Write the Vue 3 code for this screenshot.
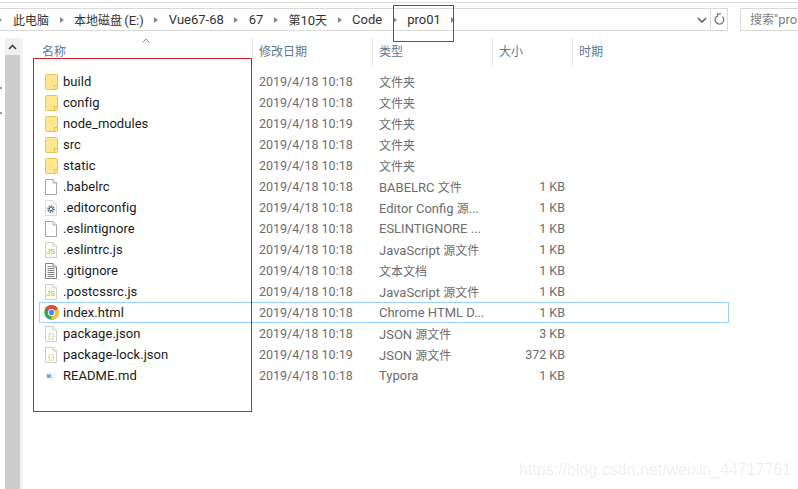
<script setup>
const crumbs = ['本地磁盘 (E:)', 'Vue67-68', '67', '第10天', 'Code', 'pro01']
const columns = [
  { label: '修改日期', width: 120 },
  { label: '类型', width: 120 },
  { label: '大小', width: 80 },
  { label: '时期', width: 160 }
]
const files = [
  { name: 'build', date: '2019/4/18 10:18', type: '文件夹', size: '', icon: 'folder' },
  { name: 'config', date: '2019/4/18 10:18', type: '文件夹', size: '', icon: 'folder' },
  { name: 'node_modules', date: '2019/4/18 10:19', type: '文件夹', size: '', icon: 'folder' },
  { name: 'src', date: '2019/4/18 10:18', type: '文件夹', size: '', icon: 'folder' },
  { name: 'static', date: '2019/4/18 10:18', type: '文件夹', size: '', icon: 'folder' },
  { name: '.babelrc', date: '2019/4/18 10:18', type: 'BABELRC 文件', size: '1 KB', icon: 'blank' },
  { name: '.editorconfig', date: '2019/4/18 10:18', type: 'Editor Config 源...', size: '1 KB', icon: 'gear' },
  { name: '.eslintignore', date: '2019/4/18 10:18', type: 'ESLINTIGNORE ...', size: '1 KB', icon: 'blank' },
  { name: '.eslintrc.js', date: '2019/4/18 10:18', type: 'JavaScript 源文件', size: '1 KB', icon: 'js' },
  { name: '.gitignore', date: '2019/4/18 10:18', type: '文本文档', size: '1 KB', icon: 'text' },
  { name: '.postcssrc.js', date: '2019/4/18 10:18', type: 'JavaScript 源文件', size: '1 KB', icon: 'js' },
  { name: 'index.html', date: '2019/4/18 10:18', type: 'Chrome HTML D...', size: '1 KB', icon: 'chrome', active: true },
  { name: 'package.json', date: '2019/4/18 10:18', type: 'JSON 源文件', size: '3 KB', icon: 'json' },
  { name: 'package-lock.json', date: '2019/4/18 10:19', type: 'JSON 源文件', size: '372 KB', icon: 'json' },
  { name: 'README.md', date: '2019/4/18 10:18', type: 'Typora', size: '1 KB', icon: 'md' }
]
// Chinese glyphs sit at 12px beside 13px Latin text, as in the reference
const runs = (text) =>
  text.split(/([\u4e00-\u9fff]+)/).filter(Boolean).map((t) => ({ t, cjk: /[\u4e00-\u9fff]/.test(t) }))
const docStroke = { blank: '#a6a6a6', gear: '#dcdcdc', js: '#cfcfcf', text: '#808080', json: '#cfcfcf' }
</script>

<template>
  <div class="win">
    <div class="topline"></div>
    <div class="toolbar">
      <div class="address">
        <div class="crumbs">
          <span class="sep first"></span>
          <span class="crumb"><span class="cjk">此电脑</span></span>
          <template v-for="c in crumbs" :key="c">
            <span class="sep"></span>
            <span class="crumb"><span v-for="(r, i) in runs(c)" :key="i" :class="{ cjk: r.cjk }">{{ r.t }}</span></span>
          </template>
          <span class="sep"></span>
        </div>
        <svg class="chev" width="10" height="6" viewBox="0 0 10 6"><path d="M1 1l4 4 4-4" fill="none" stroke="#666" stroke-width="1.7"/></svg>
        <div class="refresh">
          <svg width="11" height="13" viewBox="0 0 11 13"><path d="M8.4 3.6A4.3 4.3 0 1 1 4.2 2.6M3.4 .4V3.9M3.4 .9H7" fill="none" stroke="#777" stroke-width="1.3"/></svg>
        </div>
      </div>
      <div class="search"><span class="cjk">搜索</span>"pro01"</div>
    </div>
    <div class="body">
      <i class="tick t1"></i>
      <i class="tick t2"></i>
      <div class="scrollbar">
        <div class="scroll-btn">
          <svg width="9" height="6" viewBox="0 0 9 6"><path d="M1 5l3.5-3.5L8 5" fill="none" stroke="#444" stroke-width="1.6"/></svg>
        </div>
        <div class="scroll-thumb"></div>
      </div>
      <div class="list">
        <div class="head">
          <div class="col-name">
            <svg class="sort" width="8" height="5" viewBox="0 0 8 5"><path d="M.5 4.5L4 1l3.5 3.5" fill="none" stroke="#8f8f8f"/></svg>
            <span>名称</span>
          </div>
          <div v-for="c in columns" :key="c.label" class="col" :style="{ width: c.width + 'px' }">{{ c.label }}</div>
        </div>
        <div class="rows">
          <div v-for="f in files" :key="f.name" class="row" :class="{ active: f.active }">
            <div class="cell-name">
              <span class="icon">
                <svg v-if="f.icon === 'folder'" width="13" height="16" viewBox="0 0 13 16">
                  <path d="M.5 1.5q0-1 1-1h10q1 0 1 1v13q0 1-1 1h-10q-1 0-1-1z" fill="#ffe691" stroke="#e8c35a"/>
                  <path d="M9.5 15.5V11.5h3" fill="none" stroke="#e8c35a"/>
                </svg>
                <svg v-else-if="f.icon === 'chrome'" class="chrome" width="15" height="15" viewBox="0 0 16 16">
                  <circle cx="8" cy="8" r="7.8" fill="#3aa757"/>
                  <path d="M8 8L1.2 4.1A7.8 7.8 0 0 1 14.8 4.1z" fill="#dd4b39"/>
                  <path d="M8 8l6.8-3.9A7.8 7.8 0 0 1 8 15.8z" fill="#fbc02d"/>
                  <circle cx="8" cy="8" r="3.8" fill="#fff"/>
                  <circle cx="8" cy="8" r="2.9" fill="#4a8ff0"/>
                </svg>
                <svg v-else-if="f.icon === 'md'" class="md" width="12" height="14" viewBox="0 0 12 14">
                  <path d="M.5 3.5h11v8H2.5l-2-1.5z" fill="#f7f7f7"/>
                  <text x="2" y="9" font-size="4.6" font-weight="700" fill="#6a6a6a" font-family="Liberation Sans, sans-serif">M↓</text>
                </svg>
                <svg v-else width="12" height="16" viewBox="0 0 12 16">
                  <path d="M.5.5h7.5l3.5 3.5v11.5H.5z" :fill="f.icon === 'js' ? '#fcfcf0' : '#fff'" :stroke="docStroke[f.icon]"/>
                  <path d="M8 .5V4h3.5" fill="#f2f2f2" :stroke="docStroke[f.icon]"/>
                  <g v-if="f.icon === 'gear'">
                    <circle cx="6" cy="9" r="2.9" fill="none" stroke="#5f7480" stroke-width="1.7" stroke-dasharray="1.5 .7"/>
                    <circle cx="6" cy="9" r="1.7" fill="none" stroke="#5f7480"/>
                  </g>
                  <g v-else-if="f.icon === 'text'" stroke="#808080">
                    <path d="M2.5 3.5h4M2.5 5.5h7M2.5 7.5h7M2.5 9.5h7M2.5 11.5h7M2.5 13.5h7"/>
                  </g>
                  <text v-else-if="f.icon === 'js'" x="1.6" y="11.5" font-size="7" font-weight="700" fill="#cfc45a" font-family="Liberation Sans, sans-serif">JS</text>
                  <text v-else-if="f.icon === 'json'" x="2.4" y="11.5" font-size="6.5" fill="#c2bc5c" font-family="Liberation Mono, monospace">{}</text>
                </svg>
              </span>
              <span class="name">{{ f.name }}</span>
            </div>
            <div class="cell date">{{ f.date }}</div>
            <div class="cell type"><span v-for="(r, i) in runs(f.type)" :key="i" :class="{ cjk: r.cjk }">{{ r.t }}</span></div>
            <div class="cell size">{{ f.size }}</div>
          </div>
        </div>
      </div>
    </div>
    <div class="mark red-main"></div>
    <div class="mark red-crumb"></div>
    <div class="watermark">https://blog.csdn.net/weixin_44717761</div>
  </div>
</template>

<style>
html, body { margin: 0; background: #fff; overflow: hidden; }
</style>

<style scoped>
.win {
  position: relative;
  width: 798px;
  height: 489px;
  overflow: hidden;
  background: #fff;
  font-family: Roboto, "Noto Sans CJK SC", sans-serif;
  font-size: 12.5px;
  color: #6d6d6d;
}
.cjk { font-size: 12px; }
.topline { height: 1px; margin-top: 2px; background: #dcdcdc; }
.toolbar { display: flex; margin-top: 5px; height: 23px; }
.address {
  box-sizing: border-box;
  width: 728px;
  display: flex;
  align-items: center;
  border: 1px solid #d9d9d9;
  border-left: 0;
  height: 23px;
}
.crumbs { flex: 1; display: flex; align-items: center; color: #333; font-size: 13px; word-spacing: -1px; }
.sep {
  width: 0; height: 0; margin: 0 10.5px;
  border-left: 4px solid #8a8a8a;
  border-top: 3.5px solid transparent;
  border-bottom: 3.5px solid transparent;
}
.sep.first { margin: 0 11px 0 -2px; }
.chev { margin-right: 3px; }
.refresh {
  width: 17px; height: 21px; display: flex; align-items: center; justify-content: center;
  border-left: 1px solid #d9d9d9;
  box-sizing: border-box;
}
.search {
  box-sizing: border-box;
  margin-left: 12px;
  flex: 1;
  min-width: 0;
  height: 23px;
  border: 1px solid #d9d9d9;
  border-right: 0;
  padding-left: 9px;
  line-height: 21px;
  font-size: 13px;
  white-space: nowrap;
  overflow: hidden;
  color: #808080;
}
.body { position: relative; display: flex; margin-top: 7px; height: 451px; padding-left: 5px; }
.tick { position: absolute; left: 0; width: 2px; height: 2px; background: #9a9a9a; }
.t1 { top: 49px; }
.t2 { top: 74px; }
.scrollbar { width: 15px; display: flex; flex-direction: column; background: #f0f0f0; }
.scroll-btn { height: 17px; display: flex; align-items: center; justify-content: center; }
.scroll-thumb { flex: 1; background: #cdcdcd; }
.list { flex: 1; border-left: 3px solid #f3f3f3; padding-left: 16px; }
.head { display: flex; height: 27px; }
.col-name { position: relative; width: 213px; box-sizing: border-box; padding-left: 3px; padding-top: 4px; font-size: 12px; color: #5c7891; }
.sort { position: absolute; left: 103px; top: 0; }
.col {
  box-sizing: border-box;
  border-left: 1px solid #e5e5e5;
  padding-left: 6px;
  padding-top: 4px;
  font-size: 12px;
  color: #5c7891;
}
.rows { padding-top: 6px; }
.row { display: flex; align-items: center; height: 21px; width: 690px; box-sizing: border-box; white-space: nowrap; }
.row.active { outline: 1px solid #99d1ff; outline-offset: -1px; }
.cell-name { width: 220px; display: flex; align-items: center; color: #1a1a1a; padding-left: 6px; box-sizing: border-box; font-size: 13px; letter-spacing: .05px; flex: none; }
.icon { width: 18px; display: flex; align-items: center; flex: none; }
.chrome { margin-left: -1px; }
.date { width: 120px; flex: none; }
.type { width: 120px; flex: none; font-size: 13px; }
.size { width: 66px; flex: none; text-align: right; }
.mark { position: absolute; border: 1px solid #d3202a; box-sizing: border-box; }
.red-main { left: 33px; top: 58px; width: 219px; height: 354px; }
.red-crumb { left: 393px; top: 5px; width: 61px; height: 37px; }
.watermark {
  position: absolute;
  left: 519px;
  top: 461px;
  font-family: "Liberation Sans", sans-serif;
  font-size: 16px;
  color: rgba(120,120,120,.13);
  white-space: nowrap;
}
</style>
